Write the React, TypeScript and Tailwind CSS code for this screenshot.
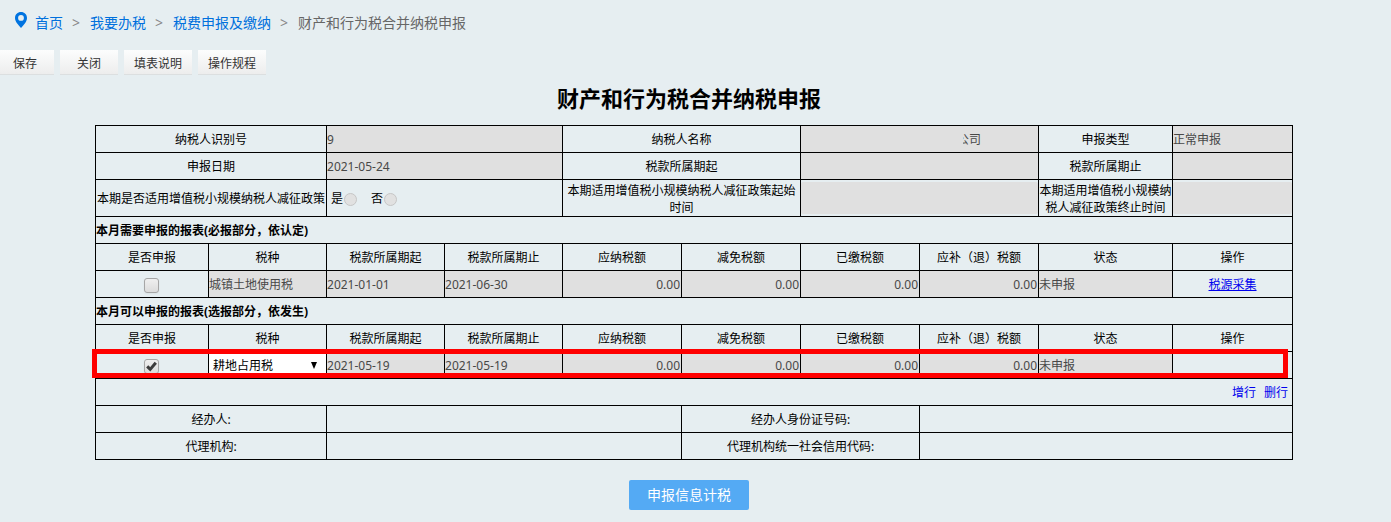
import type { ReactNode } from 'react';

const COLUMN_WIDTHS = [113, 118, 118, 118, 119, 119, 119, 119, 134, 120];

const HEADERS = [
  '是否申报',
  '税种',
  '税款所属期起',
  '税款所属期止',
  '应纳税额',
  '减免税额',
  '已缴税额',
  '应补（退）税额',
  '状态',
  '操作',
];

const AMOUNTS = HEADERS.slice(4, 8);

function Cell({ span, className = 'p-0', children }: { span?: number; className?: string; children?: ReactNode }) {
  return (
    <td colSpan={span} className={`border border-black ${className}`}>
      {children}
    </td>
  );
}

function LabelCell({ span, className = '', children }: { span?: number; className?: string; children: ReactNode }) {
  return (
    <th scope="row" colSpan={span} className={`border border-black pt-0.5 text-center font-normal ${className}`}>
      {children}
    </th>
  );
}

function Locked({ label, value = '', className = 'h-[26px]' }: { label: string; value?: string; className?: string }) {
  return (
    <input
      disabled
      aria-label={label}
      defaultValue={value}
      className={`block w-full bg-[#e0e0e0] text-[#484848] ${className}`}
    />
  );
}

function LockedCell(props: { label: string; value?: string; className?: string; span?: number }) {
  const { span, ...rest } = props;
  return (
    <Cell span={span} className="bg-[#e0e0e0] p-0">
      <Locked {...rest} />
    </Cell>
  );
}

function Check({ label, checked }: { label: string; checked?: boolean }) {
  return (
    <label className="relative mx-auto block size-[15px]">
      <input
        type="checkbox"
        aria-label={label}
        defaultChecked={checked}
        className="peer block size-[15px] appearance-none rounded-[3px] border border-[#a6a6a6] bg-linear-to-b from-[#efefef] to-[#dcdcdc] shadow-xs"
      />
      <svg
        viewBox="0 0 15 15"
        className="pointer-events-none absolute inset-0 hidden size-[15px] peer-checked:block"
        aria-hidden="true"
      >
        <path d="M3.2 7.4 6.2 10.4 11.8 3.8" fill="none" stroke="#3c3c3c" strokeWidth="3" />
      </svg>
    </label>
  );
}

function HeaderRow() {
  return (
    <tr className="h-[27px]">
      {HEADERS.map((h) => (
        <th key={h} scope="col" className="border border-black pt-0.5 text-center font-normal">
          {h}
        </th>
      ))}
    </tr>
  );
}

function SectionRow({ children }: { children: string }) {
  return (
    <tr className="h-[27px]">
      <th colSpan={10} scope="colgroup" className="border border-black pt-0.5 text-left font-bold">
        {children}
      </th>
    </tr>
  );
}

function Radio({ label }: { label: string }) {
  return (
    <label className="flex items-center">
      {label}
      <input
        type="radio"
        name="reduction"
        disabled
        className="ml-px size-[13px] appearance-none rounded-full border border-[#c6c6c6] bg-[#e1e1e1]"
      />
    </label>
  );
}

function Breadcrumb() {
  const links = ['首页', '我要办税', '税费申报及缴纳'];
  return (
    <nav aria-label="breadcrumb" className="flex h-[46px] items-center pl-[15px] text-sm text-[#666]">
      <svg viewBox="0 0 12 16" className="mr-2 mb-[6px] h-4 w-3" aria-hidden="true">
        <path
          fillRule="evenodd"
          fill="#0073e0"
          d="M6 0C2.6 0 0 2.6 0 5.9c0 2 .9 3.700 2.200 5.600C3.300 13.100 4.700 14.700 6 16c1.300-1.300 2.700-2.900 3.800-4.500C11.100 9.600 12 7.900 12 5.900 12 2.600 9.400 0 6 0Zm0 3a2.900 2.900 0 1 1 0 5.800A2.900 2.900 0 0 1 6 3Z"
        />
      </svg>
      {links.map((l) => (
        <span key={l} className="flex">
          <a href="#" className="text-[#0070dd]">
            {l}
          </a>
          <span className="mr-[10px] ml-[9px] text-[#888]">&gt;</span>
        </span>
      ))}
      <span>财产和行为税合并纳税申报</span>
    </nav>
  );
}

export default function App() {
  return (
    <div className="min-h-screen overflow-x-hidden bg-[#e6eef1] font-['Noto_Sans','Noto_Sans_CJK_SC',sans-serif] text-xs leading-[18px] text-black">
      <Breadcrumb />
      <div className="mt-1 -ml-1 flex gap-[6px]">
        {['保存', '关闭', '填表说明', '操作规程'].map((t) => (
          <button
            key={t}
            type="button"
            className="h-[25px] min-w-[58px] border-b border-[#dcdfe0] bg-linear-to-b from-[#fcfdfd] to-[#ededed] px-[10px] pt-[3px] text-[#333]"
          >
            {t}
          </button>
        ))}
      </div>
      <main className="pr-[13px]">
        <h1 className="mt-[7px] text-center text-[22px] leading-8 font-bold">财产和行为税合并纳税申报</h1>
        <div className="mt-[11px] pr-[85px] pl-[95px]">
          <table className="w-full table-fixed border-collapse">
            <colgroup>
              {COLUMN_WIDTHS.map((w, i) => (
                <col key={i} style={{ width: w }} />
              ))}
            </colgroup>
            <tbody>
              <tr className="h-[27px]">
                <LabelCell span={2}>纳税人识别号</LabelCell>
                <LockedCell span={2} label="纳税人识别号" value="9" />
                <LabelCell span={2}>纳税人名称</LabelCell>
                <Cell span={2} className="bg-[#e0e0e0] p-0">
                  <div className="relative">
                    <Locked label="纳税人名称" value="公司" className="h-[26px] pl-[156px]" />
                    <span className="absolute top-0 left-[154px] h-[26px] w-2 bg-[#e0e0e0]" />
                  </div>
                </Cell>
                <LabelCell>申报类型</LabelCell>
                <LockedCell label="申报类型" value="正常申报" />
              </tr>
              <tr className="h-[27px]">
                <LabelCell span={2}>申报日期</LabelCell>
                <LockedCell span={2} label="申报日期" value="2021-05-24" />
                <LabelCell span={2}>税款所属期起</LabelCell>
                <LockedCell span={2} label="税款所属期起" />
                <LabelCell>税款所属期止</LabelCell>
                <LockedCell label="税款所属期止" />
              </tr>
              <tr className="h-[37px]">
                <LabelCell span={2} className="whitespace-nowrap">
                  本期是否适用增值税小规模纳税人减征政策
                </LabelCell>
                <Cell span={2} className="pt-0.5">
                  <div className="flex gap-[14px] pl-1">
                    <Radio label="是" />
                    <Radio label="否" />
                  </div>
                </Cell>
                <LabelCell span={2} className="px-1 leading-[17px]">
                  本期适用增值税小规模纳税人减征政策起始时间
                </LabelCell>
                <Cell span={2}>
                  <Locked label="减征政策起始时间" className="h-8 rounded-xs" />
                </Cell>
                <LabelCell className="leading-[17px]">本期适用增值税小规模纳税人减征政策终止时间</LabelCell>
                <Cell>
                  <Locked label="减征政策终止时间" className="h-8 rounded-xs" />
                </Cell>
              </tr>

              <SectionRow>本月需要申报的报表(必报部分，依认定)</SectionRow>
              <HeaderRow />
              <tr className="h-[27px]">
                <Cell className="pt-[3px] pr-0.5">
                  <Check label="申报城镇土地使用税" />
                </Cell>
                <LockedCell label="税种" value="城镇土地使用税" />
                <LockedCell label="税款所属期起" value="2021-01-01" />
                <LockedCell label="税款所属期止" value="2021-06-30" />
                {AMOUNTS.map((a) => (
                  <LockedCell key={a} label={a} value="0.00" className="h-[26px] pr-px text-right" />
                ))}
                <LockedCell label="状态" value="未申报" />
                <Cell className="pt-0.5 text-center">
                  <a href="#" className="text-[#0000ee] underline">
                    税源采集
                  </a>
                </Cell>
              </tr>

              <SectionRow>本月可以申报的报表(选报部分，依发生)</SectionRow>
              <HeaderRow />
              <tr className="relative h-[27px]">
                <Cell className="pt-[3px] pr-0.5">
                  <Check label="申报耕地占用税" checked />
                  <span className="pointer-events-none absolute -top-[3px] right-[5px] bottom-px -left-1 border-5 border-[#ff0000]" />
                </Cell>
                <Cell>
                  <div className="flex items-center bg-white">
                    <select
                      aria-label="税种"
                      className="h-[26px] w-full appearance-none pt-0.5 pl-1"
                      defaultValue="耕地占用税"
                    >
                      <option>耕地占用税</option>
                    </select>
                    <svg viewBox="0 0 8 7" className="pointer-events-none mr-2 h-[7px] w-2 shrink-0" aria-hidden="true">
                      <path d="M1 0h6L4 7Z" />
                    </svg>
                  </div>
                </Cell>
                <LockedCell label="税款所属期起" value="2021-05-19" />
                <LockedCell label="税款所属期止" value="2021-05-19" />
                {AMOUNTS.map((a) => (
                  <LockedCell key={a} label={a} value="0.00" className="h-[26px] pr-px text-right" />
                ))}
                <LockedCell label="状态" value="未申报" />
                <Cell />
              </tr>
              <tr className="h-[27px]">
                <Cell span={10} className="pt-0.5">
                  <div className="flex justify-end gap-2 pr-1 text-[#0000ee]">
                    <a href="#">增行</a>
                    <a href="#">删行</a>
                  </div>
                </Cell>
              </tr>
              {[
                ['经办人:', '经办人身份证号码:'],
                ['代理机构:', '代理机构统一社会信用代码:'],
              ].map(([left, right]) => (
                <tr key={left} className="h-[27px]">
                  <LabelCell span={2}>{left}</LabelCell>
                  <Cell span={3}>
                    <input aria-label={left} className="block h-[26px] w-full px-1" />
                  </Cell>
                  <LabelCell span={2}>{right}</LabelCell>
                  <Cell span={3}>
                    <input aria-label={right} className="block h-[26px] w-full px-1" />
                  </Cell>
                </tr>
              ))}
            </tbody>
          </table>
        </div>
        <div className="flex justify-center py-5">
          <button type="button" className="h-[30px] w-[120px] rounded-xs bg-[#54aaf4] text-sm text-white">
            申报信息计税
          </button>
        </div>
      </main>
    </div>
  );
}
